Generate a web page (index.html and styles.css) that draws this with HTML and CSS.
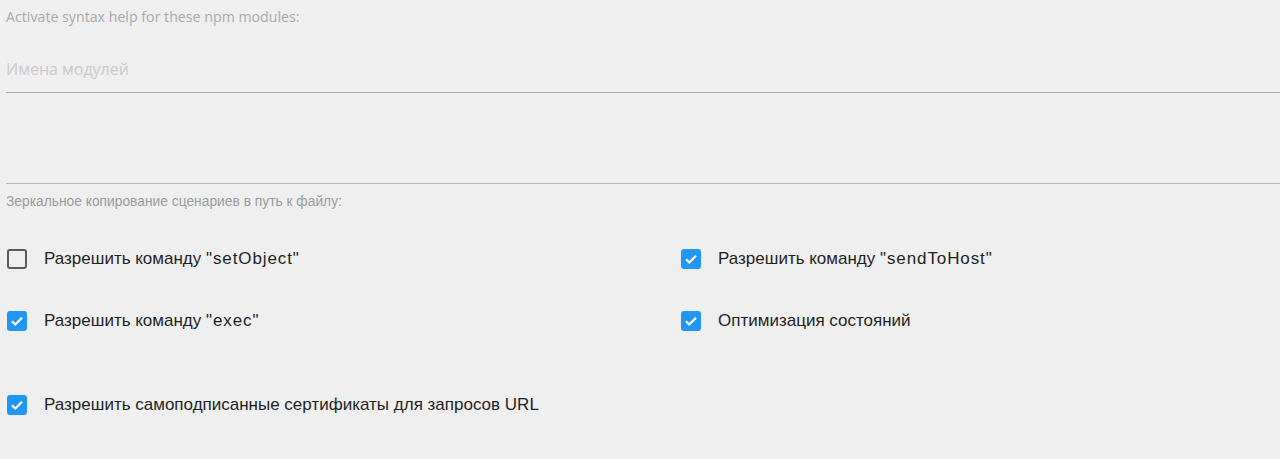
FILE: index.html
```html
<!DOCTYPE html>
<html lang="ru">
<head>
<meta charset="utf-8">
<link rel="stylesheet" href="styles.css">
</head>
<body>
<div class="page">
  <div class="field">
    <label class="hint">Activate syntax help for these npm modules:</label>
    <div class="input">Имена модулей</div>
  </div>
  <div class="field2">
    <div class="input2"></div>
    <div class="caption">Зеркальное копирование сценариев в путь к файлу:</div>
  </div>
  <div class="grid">
    <label class="cb"><span class="box"></span><span class="txt">Разрешить команду <span class="q">"setObject"</span></span></label>
    <label class="cb"><span class="box on"><svg viewBox="0 0 20 20"><path d="M5 10.2l3.3 3.3L15 6.8" fill="none" stroke="#fff" stroke-width="2.2"/></svg></span><span class="txt">Разрешить команду <span class="q">"sendToHost"</span></span></label>
    <label class="cb"><span class="box on"><svg viewBox="0 0 20 20"><path d="M5 10.2l3.3 3.3L15 6.8" fill="none" stroke="#fff" stroke-width="2.2"/></svg></span><span class="txt">Разрешить команду <span class="q">"exec"</span></span></label>
    <label class="cb"><span class="box on"><svg viewBox="0 0 20 20"><path d="M5 10.2l3.3 3.3L15 6.8" fill="none" stroke="#fff" stroke-width="2.2"/></svg></span><span class="txt">Оптимизация состояний</span></label>
  </div>
  <div class="single">
    <label class="cb"><span class="box on"><svg viewBox="0 0 20 20"><path d="M5 10.2l3.3 3.3L15 6.8" fill="none" stroke="#fff" stroke-width="2.2"/></svg></span><span class="txt">Разрешить самоподписанные сертификаты для запросов URL</span></label>
  </div>
</div>
</body>
</html>
```
FILE: styles.css
```css
html, body {
  margin: 0;
  padding: 0;
  background: #efefef;
  height: 100%;
  overflow: hidden;
}
.page {
  padding: 9px 0 0 6px;
  font-family: "Liberation Sans", Arial, sans-serif;
}
.hint {
  display: block;
  font-family: "Open Sans", sans-serif;
  font-size: 14.2px;
  line-height: 16px;
  color: #aaaaaa;
}
.input {
  margin-top: 33px;
  height: 35px;
  line-height: 22px;
  font-family: "Open Sans", sans-serif;
  font-size: 16px;
  color: #cacaca;
  border-bottom: 1px solid #aaaaaa;
  box-sizing: border-box;
}
.field2 {
  display: flex;
  flex-direction: column;
}
.input2 {
  height: 91px;
  border-bottom: 1px solid #b5b5b5;
  box-sizing: border-box;
}
.caption {
  margin-top: 11px;
  font-size: 13.8px;
  line-height: 14px;
  color: #9b9b9b;
}
.grid {
  margin-top: 40px;
  display: grid;
  grid-template-columns: 674px 1fr;
  row-gap: 42px;
}
.single {
  margin-top: 64px;
}
.cb {
  display: flex;
  align-items: center;
  height: 20px;
  padding-left: 1px;
}
.box {
  width: 20px;
  height: 20px;
  box-sizing: border-box;
  border: 2px solid #5a5a5a;
  border-radius: 3px;
  flex: none;
  display: flex;
}
.box.on {
  background: #2196f3;
  border-color: #2196f3;
}
.box svg {
  width: 20px;
  height: 20px;
  margin: -2px;
}
.txt {
  margin-left: 17px;
  font-size: 17px;
  color: #1f1f1f;
}
.q {
  letter-spacing: 0.9px;
}
```
